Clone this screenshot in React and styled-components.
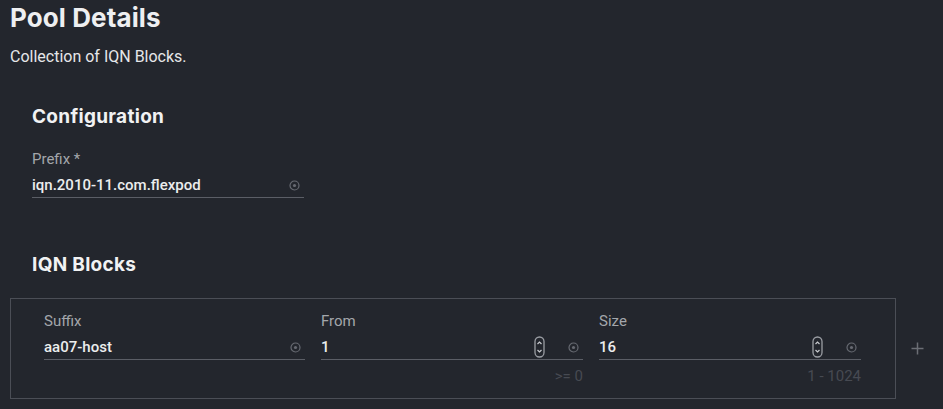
import React from "react";
import styled, { createGlobalStyle } from "styled-components";

const Global = createGlobalStyle`
  html, body { margin: 0; padding: 0; background: #23262d; }
  body { font-family: Roboto, "Liberation Sans", Arial, sans-serif; color: #e6e7e9; }
`;

const Page = styled.div`
  width: 943px;
  height: 409px;
  overflow: hidden;
  background: #23262d;
  padding: 3px 0 0 10px;
  box-sizing: border-box;
`;

const Title = styled.h1`
  margin: 0;
  font-family: Inter, Roboto, sans-serif;
  font-size: 26px;
  font-weight: 700;
  line-height: 30px;
  color: #eeeff1;
  letter-spacing: 0.1px;
`;

const Subtitle = styled.p`
  margin: 14px 0 0;
  font-size: 16px;
  line-height: 20px;
  color: #e6e7e9;
`;

const Section = styled.section`
  padding-left: ${(p) => p.$indent || 0}px;
  margin-top: ${(p) => p.$top || 0}px;
`;

const SectionTitle = styled.h2`
  margin: 0;
  font-family: Inter, Roboto, sans-serif;
  font-size: 19px;
  font-weight: 700;
  line-height: 24px;
  color: #f1f2f3;
  padding-left: 22px;
  letter-spacing: 0.3px;
`;

const Field = styled.div`
  display: flex;
  flex-direction: column;
  width: ${(p) => p.$w || 262}px;
`;

const Label = styled.label`
  font-size: 15px;
  line-height: 18px;
  color: #a3a6ab;
`;

const InputRow = styled.div`
  display: flex;
  align-items: center;
  height: ${(p) => p.$h || 24}px;
  border-bottom: 1px solid #5b5e66;
  margin-top: 5px;
`;

const Value = styled.span`
  flex: 1;
  font-size: 15px;
  font-weight: 500;
  color: #eceded;
`;

const Hint = styled.div`
  font-size: 15px;
  line-height: 18px;
  color: #474a52;
  text-align: right;
  margin-top: 7px;
  height: 18px;
`;

const BoxRow = styled.div`
  display: flex;
  align-items: flex-start;
  margin-top: 21px;
`;

const Box = styled.div`
  width: 886px;
  height: 101px;
  box-sizing: border-box;
  border: 1px solid #4b4e56;
  padding: 13px 0 0 33px;
  display: flex;
  gap: 16px;
`;

const Plus = styled.div`
  margin: 40px 0 0 11px;
  width: 20px;
  height: 20px;
  display: flex;
  align-items: center;
  justify-content: center;
`;

const IconWrap = styled.span`
  display: inline-flex;
  margin-right: ${(p) => p.$mr || 0}px;
`;

const InfoIcon = () => (
  <svg width="11" height="11" viewBox="0 0 11 11">
    <circle cx="5.5" cy="5.5" r="4.5" fill="none" stroke="#676a72" strokeWidth="1.2" />
    <circle cx="5.5" cy="5.5" r="1.6" fill="#676a72" />
  </svg>
);

const Spinner = () => (
  <svg width="11" height="22" viewBox="0 0 11 22">
    <rect x="1" y="1" width="9" height="20" rx="4.5" fill="none" stroke="#9b9ea4" strokeWidth="1.3" />
    <path d="M3.5 8 L5.5 6 L7.5 8" fill="none" stroke="#c8cace" strokeWidth="1.2" />
    <path d="M3.5 14 L5.5 16 L7.5 14" fill="none" stroke="#c8cace" strokeWidth="1.2" />
  </svg>
);

const PlusIcon = () => (
  <svg width="13" height="13" viewBox="0 0 13 13">
    <path d="M6.5 0.5 V12.5 M0.5 6.5 H12.5" stroke="#6b6e75" strokeWidth="1.5" />
  </svg>
);

const TextField = ({ label, value, w, h }) => (
  <Field $w={w}>
    <Label>{label}</Label>
    <InputRow $h={h}>
      <Value>{value}</Value>
      <IconWrap $mr={4}><InfoIcon /></IconWrap>
    </InputRow>
  </Field>
);

const NumberField = ({ label, value, hint }) => (
  <Field $w={262}>
    <Label>{label}</Label>
    <InputRow $h={24}>
      <Value>{value}</Value>
      <IconWrap $mr={23}><Spinner /></IconWrap>
      <IconWrap $mr={4}><InfoIcon /></IconWrap>
    </InputRow>
    <Hint>{hint}</Hint>
  </Field>
);

export default function App() {
  return (
    <>
      <Global />
      <Page>
        <Title>Pool Details</Title>
        <Subtitle>Collection of IQN Blocks.</Subtitle>
        <Section $top={38}>
          <SectionTitle>Configuration</SectionTitle>
          <Section $indent={22} $top={21}>
            <TextField label="Prefix *" value="iqn.2010-11.com.flexpod" w={272} h={24} />
          </Section>
        </Section>
        <Section $top={55}>
          <SectionTitle>IQN Blocks</SectionTitle>
          <BoxRow>
            <Box>
              <TextField label="Suffix" value="aa07-host" w={261} h={24} />
              <NumberField label="From" value="1" hint=">= 0" />
              <NumberField label="Size" value="16" hint="1 - 1024" />
            </Box>
            <Plus>
              <PlusIcon />
            </Plus>
          </BoxRow>
        </Section>
      </Page>
    </>
  );
}
